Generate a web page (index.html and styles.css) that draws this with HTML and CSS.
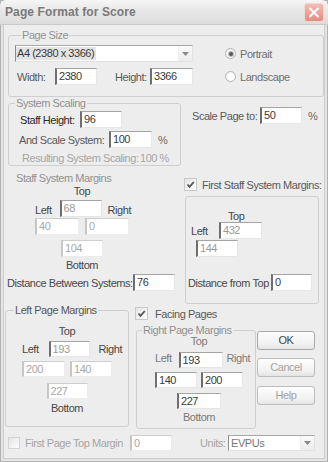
FILE: index.html
```html
<!DOCTYPE html>
<html lang="en">
<head>
  <meta charset="UTF-8" />
  <title>Page Format for Score</title>
  <link rel="stylesheet" href="styles.css">
</head>
<body>
  <div class="window">
    <div class="titlebar">
      <span class="title">Page Format for Score</span>
      <span class="close">
        <svg width="12" height="11" viewBox="0 0 12 11"><path d="M2 1.5 L10 9.5 M10 1.5 L2 9.5" stroke="#fff" stroke-width="2" stroke-linecap="round"/></svg>
      </span>
    </div>

    <!-- page size -->
    <fieldset class="group page-size">
      <legend>Page Size</legend>
      <div class="ps-row">
        <div class="combo size-combo">
          <span class="combo-text sel">A4 (2380 x 3366)</span>
          <span class="combo-btn"><svg width="7" height="4" viewBox="0 0 7 4"><path d="M0 0 H7 L3.5 4 Z" fill="#8a8a8a"/></svg></span>
        </div>
        <span class="radio on"></span><span class="radio-lbl">Portrait</span>
      </div>
      <div class="ps-row">
        <span class="lbl w-lbl">Width:</span><span class="edit w42">2380</span>
        <span class="lbl h-lbl">Height:</span><span class="edit w43">3366</span>
        <span class="radio"></span><span class="radio-lbl">Landscape</span>
      </div>
    </fieldset>

    <!-- system scaling -->
    <div class="row2">
      <fieldset class="group scaling">
        <legend>System Scaling</legend>
        <div class="f-row">
          <span class="lbl staff-h">Staff Height:</span><span class="edit w42">96</span>
        </div>
        <div class="f-row gap3">
          <span class="lbl and-scale">And Scale System:</span><span class="edit w43">100</span><span class="pct">%</span>
        </div>
        <div class="f-row gap3 short">
          <span class="lbl grey result">Resulting System Scaling:</span><span class="grey">100 %</span>
        </div>
      </fieldset>
      <div class="scale-page">
        <span class="lbl sp-lbl">Scale Page to:</span><span class="edit w42">50</span><span class="pct">%</span>
      </div>
    </div>

    <!-- staff system margins -->
    <div class="row3">
      <div class="staff">
        <div class="caption legend-like">Staff System Margins</div>
        <div class="margins staff-m">
          <div class="m-cap">Top</div>
          <div class="m-mid">
            <span class="m-side left">Left</span>
            <span class="edit dim w42">68</span>
            <span class="m-side right">Right</span>
          </div>
          <div class="m-pair">
            <span class="edit off w44">40</span>
            <span class="edit off w44">0</span>
          </div>
          <div class="m-bot"><span class="edit off w42">104</span></div>
          <div class="m-cap">Bottom</div>
        </div>
        <div class="f-row dist">
          <span class="lbl dist-lbl">Distance Between Systems:</span><span class="edit w42">76</span>
        </div>
      </div>

      <div class="first-staff">
        <div class="check-row">
          <span class="check on"><svg width="11" height="11" viewBox="0 0 11 11"><path d="M2.5 5.5 L4.5 7.8 L8.8 3" fill="none" stroke="#555" stroke-width="1.8"/></svg></span>
          <span class="check-lbl">First Staff System Margins:</span>
        </div>
        <fieldset class="group fs-box">
          <div class="fs-top">Top</div>
          <div class="fs-row">
            <span class="fs-left">Left</span><span class="edit dim w43">432</span>
          </div>
          <span class="edit dim w42 fs-144">144</span>
          <div class="f-row fs-dist">
            <span class="lbl fsd-lbl">Distance from Top</span><span class="edit w41">0</span>
          </div>
        </fieldset>
      </div>
    </div>

    <!-- page margins and buttons -->
    <div class="row4">
      <fieldset class="group left-page">
        <legend class="dark">Left Page Margins</legend>
        <div class="margins lp-m">
          <div class="m-cap">Top</div>
          <div class="m-mid">
            <span class="m-side left">Left</span>
            <span class="edit dim w41">193</span>
            <span class="m-side right">Right</span>
          </div>
          <div class="m-pair">
            <span class="edit off w43">200</span>
            <span class="edit off w42">140</span>
          </div>
          <div class="m-bot"><span class="edit off w41">227</span></div>
          <div class="m-cap">Bottom</div>
        </div>
      </fieldset>

      <div class="mid">
        <div class="check-row facing">
          <span class="check on"><svg width="11" height="11" viewBox="0 0 11 11"><path d="M2.5 5.5 L4.5 7.8 L8.8 3" fill="none" stroke="#555" stroke-width="1.8"/></svg></span>
          <span class="check-lbl">Facing Pages</span>
        </div>
        <fieldset class="group right-page">
          <legend>Right Page Margins</legend>
          <div class="margins rp-m">
            <div class="m-cap">Top</div>
            <div class="m-mid">
              <span class="m-side left">Left</span>
              <span class="edit w44">193</span>
              <span class="m-side right">Right</span>
            </div>
            <div class="m-pair">
              <span class="edit w42">140</span>
              <span class="edit w42">200</span>
            </div>
            <div class="m-bot"><span class="edit w44">227</span></div>
            <div class="m-cap">Bottom</div>
          </div>
        </fieldset>
      </div>

      <div class="btns">
        <div class="btn">OK</div>
        <div class="btn grey">Cancel</div>
        <div class="btn grey help">Help</div>
      </div>
    </div>

    <!-- bottom line -->
    <div class="row5">
      <span class="check small"></span>
      <span class="lbl grey fptm">First Page Top Margin</span>
      <span class="edit off w42 h16">0</span>
      <span class="lbl grey units">Units:</span>
      <div class="combo units-combo">
        <span class="combo-text">EVPUs</span>
        <span class="combo-btn"><svg width="7" height="4" viewBox="0 0 7 4"><path d="M0 0 H7 L3.5 4 Z" fill="#8a8a8a"/></svg></span>
      </div>
    </div>
  </div>
</body>
</html>
```

FILE: styles.css
```css
* {
  box-sizing: border-box;
}
body {
  margin: 0;
  font-family: "Liberation Sans", Arial, sans-serif;
  font-size: 11px;
  letter-spacing: -0.45px;
  color: #484848;
  background: #ececec;
}
.window {
  width: 328px;
  height: 462px;
  overflow: hidden;
  background: #ededed;
  box-shadow: inset 0 0 0 1px #b2b2b2, inset 0 0 0 3px #e4e4e4, inset 0 0 0 4px #cdcdcd;
}

/* title bar */
.titlebar {
  height: 25px;
  display: flex;
  align-items: center;
  padding: 0 4px 0 5px;
  background: linear-gradient(#f6f6f6, #e7e7e7 45%, #dcdcdc);
  border-bottom: 1px solid #cacaca;
  border-radius: 6px 6px 0 0;
}
.title {
  font-size: 12px;
  font-weight: bold;
  letter-spacing: 0.1px;
  color: #7a7a7a;
}
.close {
  margin-left: auto;
  width: 20px;
  height: 19px;
  display: flex;
  align-items: center;
  justify-content: center;
  border: 1px solid #f4d6d0;
  border-radius: 3px;
  background: linear-gradient(#f3bdb5, #e58b80);
}

/* group boxes */
.group {
  margin: 0;
  padding: 0;
  min-inline-size: 0;
  border: 1px solid #cfcfcf;
  border-radius: 3px;
}
.group > legend {
  padding: 0 1px;
  margin-left: 6px;
  line-height: 13px;
  color: #919191;
}
.group > legend.dark {
  color: #585858;
}
.legend-like {
  color: #919191;
  line-height: 13px;
}

/* controls */
.lbl {
  flex: none;
  white-space: nowrap;
}
.grey {
  color: #a6a6a6;
}
.edit {
  display: block;
  flex: none;
  height: 17px;
  padding: 1px 0 0 2px;
  line-height: 13px;
  background: #fff;
  border: 1px solid;
  border-color: #a4a4a4 #e6e6e6 #e6e6e6 #6f6f6f;
  border-left-width: 2px;
  color: #3a3a3a;
  white-space: nowrap;
}
.edit.dim {
  color: #9a9a9a;
}
.edit.off {
  color: #a8a8a8;
  border-color: #cfcfcf #ececec #ececec #c6c6c6;
}
.w41 { width: 41px; }
.w42 { width: 42px; }
.w43 { width: 43px; }
.w44 { width: 44px; }
.h16 { height: 16px; }
.pct {
  margin-left: 6px;
  color: #666;
}
.combo {
  display: flex;
  align-items: center;
  height: 17px;
  background: #fff;
  border: 1px solid;
  border-color: #a8a8a8 #e2e2e2 #e2e2e2 #8c8c8c;
}
.combo-text {
  padding: 0 2px 0 1px;
  line-height: 13px;
  white-space: nowrap;
}
.combo-text.sel {
  background: #e4e4e4;
  color: #3a3a3a;
}
.combo-btn {
  margin-left: auto;
  width: 14px;
  height: 100%;
  display: flex;
  align-items: center;
  justify-content: center;
  background: linear-gradient(#fbfbfb, #ececec);
  border-left: 1px solid #ededed;
}
.radio {
  flex: none;
  width: 11px;
  height: 11px;
  margin-left: 32px;
  border: 1px solid #b4b4b4;
  border-radius: 50%;
  background: radial-gradient(circle at 60% 60%, #fff 40%, #e2e2e2);
  display: flex;
  align-items: center;
  justify-content: center;
}
.radio.on::after {
  content: "";
  width: 4px;
  height: 4px;
  border-radius: 50%;
  background: #5c5c5c;
  box-shadow: 0 0 0 1px #b8b8b8;
}
.radio-lbl {
  margin-left: 4px;
  color: #707070;
}
.check {
  flex: none;
  width: 13px;
  height: 13px;
  display: flex;
  align-items: center;
  justify-content: center;
  border: 1px solid #c8c8c8;
  background: linear-gradient(135deg, #e4e4e4, #fff);
}
.check.small {
  width: 12px;
  height: 12px;
  border-color: #d4d4d4;
}
.check-lbl {
  white-space: nowrap;
  color: #5a5a5a;
}
.btn {
  height: 19px;
  line-height: 17px;
  text-align: center;
  border: 1px solid #a9a9a9;
  border-radius: 3px;
  background: linear-gradient(#fefefe, #f1f1f1 70%, #e4e4e4);
  color: #444;
}
.btn + .btn {
  margin-top: 8px;
}
.btn.help {
  margin-top: 9px;
}
.btn.grey {
  color: #a4a4a4;
  border-color: #bdbdbd;
}

/* margin boxes: Top / Left x Right / two / bottom / Bottom */
.margins {
  display: flex;
  flex-direction: column;
}
.m-cap {
  text-align: center;
  line-height: 13px;
}
.m-mid {
  display: grid;
  grid-template-columns: 1fr auto 1fr;
  align-items: end;
}
.m-side {
  line-height: 13px;
}
.m-side.left {
  text-align: right;
  padding-right: 8px;
}
.m-side.right {
  padding-left: 6px;
}
.m-pair {
  display: flex;
  justify-content: space-between;
}
.m-bot {
  display: flex;
  justify-content: center;
}

/* page size */
.page-size {
  margin: 4px 0 0 8px;
  width: 316px;
  padding: 3px 0 11px 6px;
}
.ps-row {
  display: flex;
  align-items: center;
  height: 17px;
}
.ps-row + .ps-row {
  margin-top: 6px;
}
.size-combo {
  width: 178px;
}
.w-lbl {
  width: 38px;
  margin-left: 2px;
  color: #5a5a5a;
}
.h-lbl {
  width: 35px;
  margin-left: 18px;
  color: #5a5a5a;
}

/* system scaling */
.row2 {
  display: flex;
  align-items: flex-start;
}
.scaling {
  margin-left: 8px;
  width: 173px;
  padding: 1px 0 1px 0;
}
.f-row {
  display: flex;
  align-items: center;
  height: 17px;
}
.f-row.gap3 {
  margin-top: 3px;
}
.f-row.short {
  height: 13px;
}
.staff-h {
  width: 60px;
  margin-left: 11px;
  color: #2a2a2a;
}
.and-scale {
  width: 90px;
  margin-left: 10px;
  color: #5a5a5a;
}
.result {
  width: 118px;
  margin-left: 13px;
}
.scale-page {
  display: flex;
  align-items: center;
  margin: 10px 0 0 11px;
}
.sp-lbl {
  width: 68px;
  color: #5a5a5a;
}

/* staff system margins */
.row3 {
  display: flex;
  height: 138px;
}
.staff {
  width: 182px;
  padding-top: 6px;
}
.staff .caption {
  margin-left: 16px;
}
.staff-m {
  width: 94px;
  margin-left: 35px;
}
.staff-m .m-mid {
  margin-top: 2px;
}
.staff-m .m-pair {
  margin-top: 1px;
}
.staff-m .m-bot {
  margin-top: 5px;
}
.staff-m .m-cap:last-child {
  margin-top: 2px;
}
.f-row.dist {
  margin-top: 2px;
}
.dist-lbl {
  width: 126px;
  margin-left: 7px;
}
.first-staff {
  width: 140px;
}
.check-row {
  display: flex;
  align-items: center;
  height: 13px;
  margin-top: 12px;
}
.first-staff .check {
  margin-left: 2px;
}
.first-staff .check-lbl {
  margin-left: 5px;
}
.fs-box {
  margin: 5px 0 0 3px;
  width: 134px;
  height: 108px;
  padding: 14px 0 0 2px;
}
.fs-top {
  margin-left: 40px;
  line-height: 11px;
}
.fs-row {
  display: flex;
  align-items: center;
}
.fs-left {
  width: 28px;
  margin-left: 3px;
}
.fs-144 {
  margin: 1px 0 0 8px;
}
.f-row.fs-dist {
  margin-top: 17px;
}
.fsd-lbl {
  width: 83px;
}

/* page margins */
.row4 {
  display: flex;
  align-items: flex-start;
}
.left-page {
  margin-left: 5px;
  width: 124px;
  height: 123px;
  padding: 8px 0 0 16px;
}
.left-page > legend {
  margin-left: -8px;
}
.lp-m {
  width: 90px;
}
.lp-m .edit {
  height: 16px;
}
.lp-m .m-side.left {
  padding-right: 10px;
}
.lp-m .m-side.right {
  padding-left: 9px;
}
.lp-m .m-mid {
  margin-top: 3px;
  align-items: center;
}
.lp-m .m-pair {
  margin-top: 4px;
}
.lp-m .m-bot {
  margin-top: 6px;
}
.lp-m .m-cap:last-child {
  margin-top: 3px;
}
.mid {
  margin-left: 6px;
  width: 121px;
}
.check-row.facing {
  margin-top: 3px;
}
.facing .check-lbl {
  margin-left: 7px;
}
.right-page {
  margin: 4px 0 0 1px;
  width: 120px;
  height: 105px;
  padding: 0 0 0 18px;
}
.right-page > legend {
  margin-left: -13px;
}
.rp-m {
  width: 88px;
  color: #7a7a7a;
}
.rp-m .edit {
  height: 16px;
}
.rp-m .m-cap:first-child {
  margin-top: -2px;
  line-height: 12px;
}
.rp-m .m-mid {
  margin-top: 5px;
  align-items: start;
}
.rp-m .m-side.left {
  padding-right: 7px;
}
.rp-m .m-side.right {
  padding-left: 4px;
}
.rp-m .m-pair {
  margin-top: 4px;
}
.rp-m .m-bot {
  margin-top: 5px;
}
.rp-m .m-cap:last-child {
  margin-top: 2px;
  line-height: 12px;
}
.btns {
  margin: 27px 0 0 1px;
  width: 58px;
}

/* bottom line */
.row5 {
  display: flex;
  align-items: center;
  height: 16px;
  margin-top: 6px;
}
.row5 .check {
  margin-left: 8px;
}
.fptm {
  width: 105px;
  margin-left: 5px;
}
.units {
  width: 28px;
  margin-left: 28px;
}
.units-combo {
  width: 87px;
  height: 16px;
}
.units-combo .combo-text {
  color: #777;
  padding-left: 2px;
}
```
